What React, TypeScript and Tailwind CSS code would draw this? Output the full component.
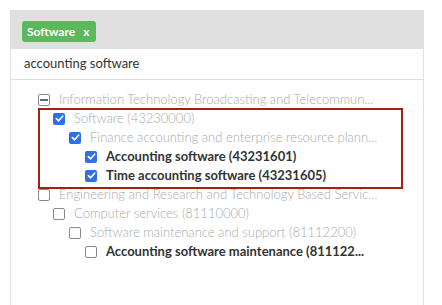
import React from "react"

type Row = {
  level: number
  label: string
  state: "checked" | "unchecked" | "partial"
  strong?: boolean
}

const rows: Row[] = [
  { level: 0, label: "Information Technology Broadcasting and Telecommun...", state: "partial" },
  { level: 1, label: "Software (43230000)", state: "checked" },
  { level: 2, label: "Finance accounting and enterprise resource plann...", state: "checked" },
  { level: 3, label: "Accounting software (43231601)", state: "checked", strong: true },
  { level: 3, label: "Time accounting software (43231605)", state: "checked", strong: true },
  { level: 0, label: "Engineering and Research and Technology Based Servic...", state: "unchecked" },
  { level: 1, label: "Computer services (81110000)", state: "unchecked" },
  { level: 2, label: "Software maintenance and support (81112200)", state: "unchecked" },
  { level: 3, label: "Accounting software maintenance (811122...", state: "unchecked", strong: true },
]

const indents = ["pl-0", "pl-[15px]", "pl-[31px]", "pl-[47px]"]

function Box({ state }: { state: Row["state"] }) {
  if (state === "checked") {
    return (
      <span className="flex h-[12px] w-[12px] shrink-0 items-center justify-center rounded-[2px] bg-[#2f6fe8]">
        <svg width="9" height="9" viewBox="0 0 10 10" fill="none">
          <path d="M1.5 5.2 L4 7.6 L8.5 2.4" stroke="white" strokeWidth="1.8" strokeLinecap="round" strokeLinejoin="round" />
        </svg>
      </span>
    )
  }
  return (
    <span className="flex h-[12px] w-[12px] shrink-0 items-center justify-center rounded-[2px] border border-[#8a8a8a] bg-white">
      {state === "partial" && <span className="block h-[2px] w-[8px] bg-[#666]" />}
    </span>
  )
}

export default function App() {
  return (
    <div className="h-[305px] w-[442px] bg-white pl-[10px] pt-[10px]" style={{ fontFamily: "Lato, 'Noto Sans', sans-serif" }}>
      <div className="flex h-[295px] w-[414px] flex-col border-x border-[#e2e2e2]">
        {/* 선택된 태그 */}
        <div className="-mx-px flex h-[39px] items-start bg-[#e0e0e0] pl-[12px] pt-[11px]">
          <span className="flex h-[21px] items-center gap-[8px] rounded-[3px] bg-[#5cb85c] px-[5px] text-[12px] font-bold leading-none text-white">
            Software <span className="pr-[2px]">x</span>
          </span>
        </div>

        {/* 검색어 */}
        <div className="flex h-[31px] items-center border-b border-[#dedede] pl-[13px] text-[13px] text-[#333]">
          accounting software
        </div>

        {/* 트리 */}
        <div className="relative ml-[27px] mt-[10px]">
          {rows.map((row, i) => (
            <div key={i} className={`flex h-[19px] items-center gap-[9px] ${indents[row.level]}`}>
              <Box state={row.state} />
              <span className={`whitespace-nowrap text-[13px] ${row.strong ? "font-bold text-[#333]" : "font-light text-[#aaa]"}`}>
                {row.label}
              </span>
            </div>
          ))}
          <div className="pointer-events-none absolute left-0 top-[18px] h-[81px] w-[365px] border-2 border-[#a3200c]" />
        </div>
      </div>
    </div>
  )
}
